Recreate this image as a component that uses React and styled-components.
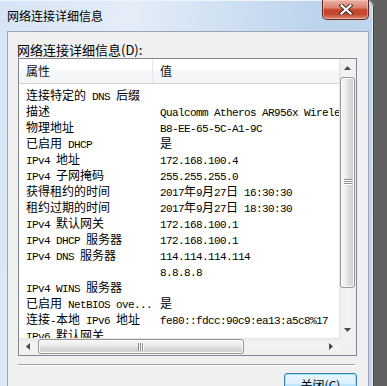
import React from 'react'
import styled, { createGlobalStyle } from 'styled-components'

const GlobalStyle = createGlobalStyle`
  html, body {
    margin: 0;
    padding: 0;
  }
  body {
    background: #616161;
    overflow: hidden;
    font-family: "Noto Sans CJK SC", sans-serif;
  }
`

const rows = [
  ['连接特定的 DNS 后缀', ''],
  ['描述', 'Qualcomm Atheros AR956x Wireless Network Adapter'],
  ['物理地址', 'B8-EE-65-5C-A1-9C'],
  ['已启用 DHCP', '是'],
  ['IPv4 地址', '172.168.100.4'],
  ['IPv4 子网掩码', '255.255.255.0'],
  ['获得租约的时间', '2017年9月27日 16:30:30'],
  ['租约过期的时间', '2017年9月27日 18:30:30'],
  ['IPv4 默认网关', '172.168.100.1'],
  ['IPv4 DHCP 服务器', '172.168.100.1'],
  ['IPv4 DNS 服务器', '114.114.114.114'],
  ['', '8.8.8.8'],
  ['IPv4 WINS 服务器', ''],
  ['已启用 NetBIOS ove...', '是'],
  ['连接-本地 IPv6 地址', 'fe80::fdcc:90c9:ea13:a5c8%17'],
  ['IPv6 默认网关', ''],
]

// ascii runs get the half width look of SimSun, the rest stays full width
const splitRuns = text => text.match(/[\x00-\x7f]+|[^\x00-\x7f]+/g) || []

function Mixed({ text }) {
  return splitRuns(text).map((run, i) =>
    /^[\x00-\x7f]/.test(run)
      ? <Half key={i}>{run}</Half>
      : <Full key={i}>{run}</Full>
  )
}

const Arrow = ({ dir }) => {
  const pts = {
    up: '0,4 3.5,0 7,4',
    down: '0,0 3.5,4 7,0',
    left: '4,0 0,3.5 4,7',
    right: '0,0 4,3.5 0,7',
  }[dir]
  const vertical = dir === 'up' || dir === 'down'
  return (
    <svg width={vertical ? 7 : 4} height={vertical ? 4 : 7}>
      <polygon points={pts} fill="#4a4a4a" />
    </svg>
  )
}

const Grip = ({ vertical }) => (
  <svg width={vertical ? 8 : 7} height={vertical ? 7 : 8}>
    {[0, 2, 4].map(o =>
      vertical ? (
        <g key={o}>
          <rect x="0" y={o} width="8" height="1" fill="#8f8f8f" />
          <rect x="0" y={o + 1} width="8" height="1" fill="#ffffff" />
        </g>
      ) : (
        <g key={o}>
          <rect x={o} y="0" width="1" height="8" fill="#8f8f8f" />
          <rect x={o + 1} y="0" width="1" height="8" fill="#ffffff" />
        </g>
      )
    )}
  </svg>
)

function App() {
  return (
    <>
      <GlobalStyle />
      <Page>
        <Window>
          <TitleBar>
            <Title>网络连接详细信息</Title>
            <CloseButton>
              <svg width="14" height="11" viewBox="0 0 14 11">
                <path d="M2.5 1.5 L11.5 9.5 M11.5 1.5 L2.5 9.5" stroke="#3a2a2a" strokeWidth="4" strokeLinecap="square" />
                <path d="M2.5 1.5 L11.5 9.5 M11.5 1.5 L2.5 9.5" stroke="#ffffff" strokeWidth="2.2" strokeLinecap="square" />
              </svg>
            </CloseButton>
          </TitleBar>

          <Panel>
            <Label>网络连接详细信息(D):</Label>
            <ListBox>
              <Viewport>
                <Header>
                  <HeadCell $first>属性</HeadCell>
                  <HeadCell>值</HeadCell>
                </Header>
                <Rows>
                  {rows.map(([name, value], i) => (
                    <Row key={i}>
                      <NameCell><Mixed text={name} /></NameCell>
                      <ValueCell><Mixed text={value} /></ValueCell>
                    </Row>
                  ))}
                </Rows>
              </Viewport>

              <VScroll>
                <ScrollButton><Arrow dir="up" /></ScrollButton>
                <VThumb><Grip vertical /></VThumb>
                <Spacer />
                <ScrollButton><Arrow dir="down" /></ScrollButton>
              </VScroll>

              <HScroll>
                <ScrollButton><Arrow dir="left" /></ScrollButton>
                <HThumb><Grip /></HThumb>
                <Spacer />
                <ScrollButton><Arrow dir="right" /></ScrollButton>
              </HScroll>

              <Corner />
            </ListBox>

            <Separator />

            <Footer>
              <DialogButton>关闭(C)</DialogButton>
            </Footer>
          </Panel>
        </Window>
      </Page>
    </>
  )
}

const Page = styled.div`
  width: 387px;
  height: 386px;
  overflow: hidden;
  display: flex;
  align-items: flex-start;
  background: #616161;
`

const Window = styled.div`
  width: 374px;
  height: 420px;
  flex: none;
  box-sizing: border-box;
  padding: 0 5px 0 7px;
  display: flex;
  flex-direction: column;
  border-top-right-radius: 7px;
  background: linear-gradient(100deg, #d6e4f4 0%, #e4edf8 30%, #d2e2f3 48%, #bcd3ec 72%, #c3d7ee 100%);
  box-shadow: inset -1px 0 0 #39424e, inset -2px 0 0 #e6eef8, inset 0 1px 0 #eef4fb;
`

const TitleBar = styled.div`
  height: 31px;
  flex: none;
  display: flex;
  align-items: flex-start;
  justify-content: space-between;
`

const Title = styled.div`
  padding-top: 8px;
  font-size: 12px;
  line-height: 16px;
  color: #000;
`

const CloseButton = styled.div`
  width: 47px;
  height: 20px;
  box-sizing: border-box;
  display: flex;
  align-items: center;
  justify-content: center;
  border: 1px solid #5e2a22;
  border-top: none;
  border-radius: 0 0 5px 5px;
  background: linear-gradient(#eab1a4 0%, #db8371 40%, #c8442b 52%, #c4482f 75%, #dc8a74 100%);
  box-shadow: inset 0 0 0 1px rgba(255, 220, 210, 0.45);
`

const Panel = styled.div`
  flex: 1;
  box-sizing: border-box;
  background: #f0f0f0;
  border: 1px solid #9aa6b4;
  padding: 9px 11px 0 10px;
  display: flex;
  flex-direction: column;
`

const Label = styled.div`
  margin-left: -1px;
  font-size: 13px;
  line-height: 17px;
  color: #000;
`

const ListBox = styled.div`
  width: 339px;
  height: 298px;
  flex: none;
  box-sizing: border-box;
  border: 1px solid #828790;
  background: #fff;
  display: grid;
  grid-template-columns: 1fr 17px;
  grid-template-rows: 1fr 17px;
`

const Viewport = styled.div`
  overflow: hidden;
  min-width: 0;
`

const Header = styled.div`
  display: grid;
  grid-template-columns: 134px 1fr;
  height: 24px;
  border-bottom: 1px solid #d5d5d5;
  background: linear-gradient(#ffffff 0%, #ffffff 45%, #f7f8f9 46%, #f3f4f6 100%);
`

const HeadCell = styled.div`
  padding-left: 7px;
  font-size: 12px;
  line-height: 24px;
  color: #111;
  border-right: ${p => (p.$first ? '1px solid #e3e8ee' : 'none')};
`

const Rows = styled.div`
  padding-top: 1px;
`

const Row = styled.div`
  display: grid;
  grid-template-columns: 134px max-content;
  height: 16px;
  line-height: 16px;
  white-space: nowrap;
  color: #000;
`

const NameCell = styled.div`
  padding-left: 7px;
`

const ValueCell = styled.div`
  padding-left: 7px;
`

const Half = styled.span`
  font-family: "Liberation Mono", monospace;
  font-size: 11px;
  letter-spacing: -0.6px;
  white-space: pre;
`

const Full = styled.span`
  font-family: "Noto Sans CJK SC", sans-serif;
  font-size: 12px;
`

const VScroll = styled.div`
  display: flex;
  flex-direction: column;
  background: linear-gradient(90deg, #e3e3e3 0, #eeeeee 2px, #f4f4f4 50%, #eeeeee 100%);
`

const HScroll = styled.div`
  display: flex;
  background: linear-gradient(#e3e3e3 0, #eeeeee 2px, #f4f4f4 50%, #eeeeee 100%);
`

const ScrollButton = styled.div`
  width: 17px;
  height: 17px;
  flex: none;
  display: flex;
  align-items: center;
  justify-content: center;
`

const VThumb = styled.div`
  height: 211px;
  margin: 1px 1px 0;
  flex: none;
  box-sizing: border-box;
  display: flex;
  align-items: center;
  justify-content: center;
  border: 1px solid #979797;
  border-radius: 3px;
  background: linear-gradient(90deg, #f6f6f6 0%, #ececec 45%, #dcdcdc 55%, #d0d0d0 100%);
  box-shadow: inset 0 0 0 1px #fbfbfb;
`

const HThumb = styled.div`
  width: 206px;
  margin: 1px 0 1px 2px;
  flex: none;
  box-sizing: border-box;
  display: flex;
  align-items: center;
  justify-content: center;
  border: 1px solid #979797;
  border-radius: 3px;
  background: linear-gradient(#f6f6f6 0%, #ececec 45%, #dcdcdc 55%, #d0d0d0 100%);
  box-shadow: inset 0 0 0 1px #fbfbfb;
`

const Spacer = styled.div`
  flex: 1;
`

const Corner = styled.div`
  background: #f0f0f0;
`

const Separator = styled.div`
  width: 337px;
  margin-top: 8px;
  border-top: 1px solid #a0a0a0;
  border-bottom: 1px solid #ffffff;
`

const Footer = styled.div`
  width: 339px;
  margin-top: 7px;
  display: flex;
  justify-content: flex-end;
`

const DialogButton = styled.div`
  width: 73px;
  height: 23px;
  box-sizing: border-box;
  border: 1px solid #3c7fb1;
  border-radius: 3px;
  background: linear-gradient(#eaf6fd 0%, #d9f0fc 45%, #bee6fd 50%, #a7d9f5 100%);
  box-shadow: inset 0 0 0 1px #9ee3f9;
  font-size: 12px;
  line-height: 21px;
  text-align: center;
  color: #000;
`

export default App
